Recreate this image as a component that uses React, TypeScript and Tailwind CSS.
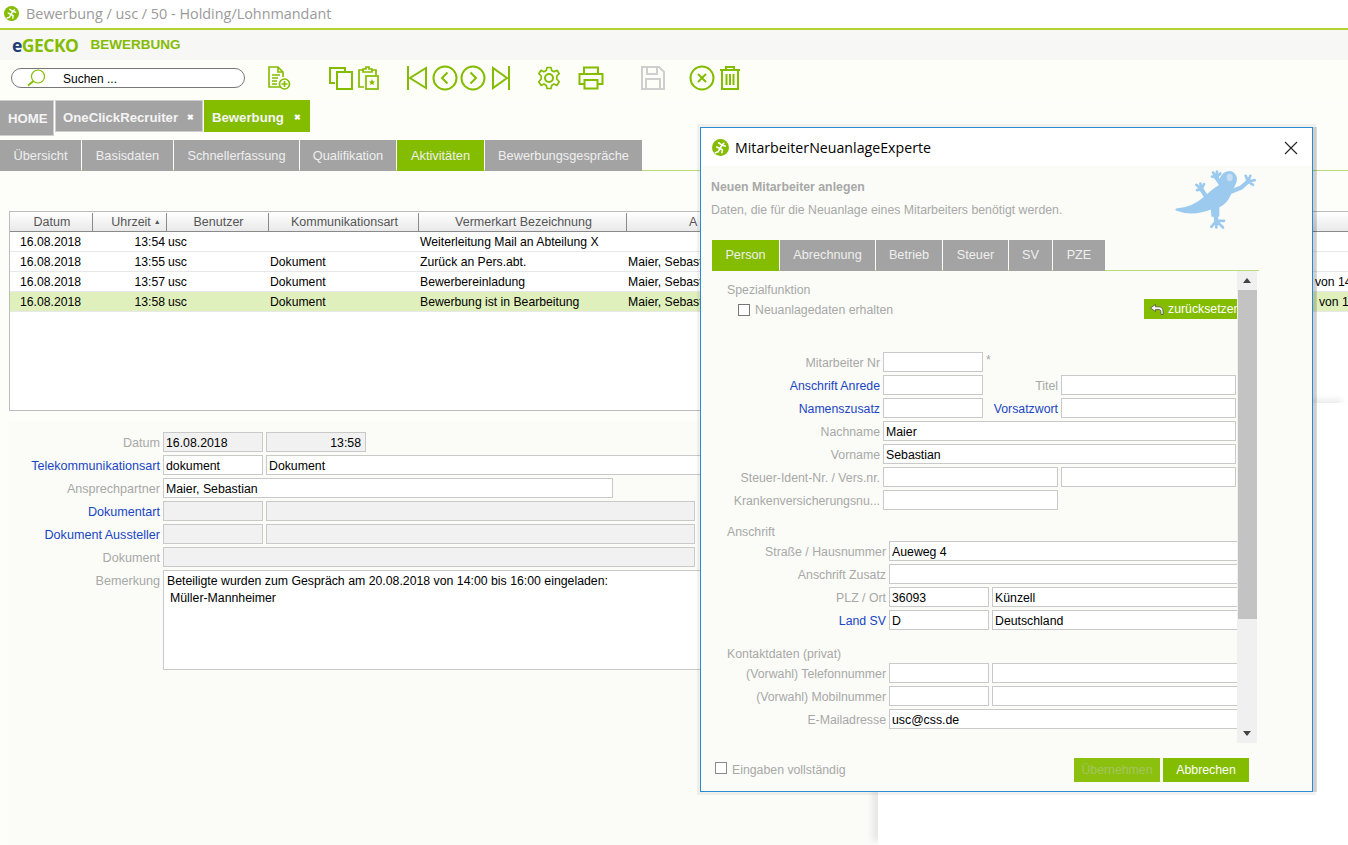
import React from "react";

const G = "#84bc00";

function GeckoBadge({ size = 18 }: { size?: number }) {
  return (
    <svg width={size} height={size} viewBox="0 0 18 18">
      <circle cx="9" cy="9" r="9" fill="#84bc00" />
      <path d="M12.5 4.5 L10.5 6.5 L7 4 M10.5 6.5 L8.5 10 L5 8.5 M8.5 10 L11 11.5 L10.5 14.5 M8.5 10 L6.5 13.5 L3.5 14.5 M10.5 6.5 L14 7.5" stroke="#fff" strokeWidth="1.7" fill="none" strokeLinecap="round" strokeLinejoin="round" />
    </svg>
  );
}

function Gecko() {
  return (
    <svg width="85" height="62" viewBox="40 25 255 185">
      <g fill="#9ccaef" stroke="#9ccaef" strokeLinecap="round" strokeLinejoin="round">
        <path d="M50 146 C80 144 110 133 135 110 C150 96 165 82 185 72 C178 60 185 38 205 34 C222 32 232 48 228 62 L218 85 L210 102 C204 118 192 130 176 138 L176 165 L158 165 L156 142 C125 155 85 160 50 146 Z" strokeWidth="6" />
        <path d="M140 108 L125 85" strokeWidth="13" fill="none" />
        <path d="M125 85 L110 72 M125 85 L122 68 M125 85 L133 70 M125 85 L112 88" strokeWidth="8" fill="none" />
        <path d="M185 72 L170 50" strokeWidth="13" fill="none" />
        <path d="M170 50 L160 35 M170 50 L172 32 M170 50 L182 38 M170 50 L157 47" strokeWidth="8" fill="none" />
        <path d="M215 92 L245 80 L265 62" strokeWidth="13" fill="none" />
        <path d="M265 62 L258 45 M265 62 L272 45 M265 62 L285 58 M265 62 L280 72" strokeWidth="8" fill="none" />
        <path d="M166 150 L170 180" strokeWidth="13" fill="none" />
        <path d="M170 180 L155 198 M170 180 L170 200 M170 180 L190 200 M170 180 L193 180" strokeWidth="8" fill="none" />
      </g>
      <ellipse cx="210" cy="50" rx="9" ry="11" fill="#c5def5" />
    </svg>
  );
}

const ic = { fill: "none", stroke: G, strokeWidth: 2 } as const;

function Toolbar() {
  return (
    <div className="flex h-[40px] items-center bg-[#fdfef8] pb-[4px]">
      <div className="ml-[11px] flex h-[20px] w-[234px] shrink-0 items-center rounded-full border border-[#777] bg-white">
        <svg width="26" height="18" viewBox="0 0 26 18" className="ml-[9px]">
          <circle cx="17" cy="7.5" r="6.5" fill="none" stroke={G} strokeWidth="1.2" />
          <path d="M12.5 12 L7 16.5" stroke={G} strokeWidth="1.8" />
        </svg>
        <span className="ml-[16px] pt-[1px] text-[12px] text-black">Suchen ...</span>
      </div>
      <svg width="24" height="26" viewBox="0 0 24 26" className="ml-[22px]" {...ic} strokeWidth="1.6">
        <path d="M13 22 H2 V2 H11 L16 7 V12 M11 2 V7 H16" />
        <path d="M5 10 H13 M5 13 H11 M5 16 H10 M5 19 H10" />
        <circle cx="17.5" cy="19" r="5" />
        <path d="M17.5 16 V22 M14.5 19 H20.5" />
      </svg>
      <svg width="26" height="24" viewBox="0 0 26 24" className="ml-[37px]" {...ic}>
        <path d="M7 17 H2 V2 H17 V5" />
        <rect x="9" y="6" width="15" height="17" />
      </svg>
      <svg width="22" height="24" viewBox="0 0 22 24" className="ml-[3px]" {...ic} strokeWidth="1.7">
        <path d="M6 4 H2 V21 H7 M15 4 H19 V9" />
        <path d="M6 6 V3 H9 V1 H12 V3 H15 V6 Z" />
        <rect x="9" y="10" width="12" height="13" />
        <path d="M15 13 L15.9 15.3 L18 15.4 L16.4 17 L17 19 L15 18 L13 19 L13.6 17 L12 15.4 L14.1 15.3 Z" fill={G} stroke="none" />
      </svg>
      <svg width="22" height="26" viewBox="0 0 22 26" className="ml-[27px]" {...ic}>
        <path d="M2 1 V25" />
        <path d="M20 3 V23 L4 13 Z" />
      </svg>
      <svg width="26" height="26" viewBox="0 0 26 26" className="ml-[4px]" {...ic}>
        <circle cx="13" cy="13" r="11.5" />
        <path d="M15.5 7.5 L10 13 L15.5 18.5" />
      </svg>
      <svg width="26" height="26" viewBox="0 0 26 26" className="ml-[2px]" {...ic}>
        <circle cx="13" cy="13" r="11.5" />
        <path d="M10.5 7.5 L16 13 L10.5 18.5" />
      </svg>
      <svg width="18" height="26" viewBox="0 0 18 26" className="ml-[6px]" {...ic}>
        <path d="M17 1 V25" />
        <path d="M1 3 V23 L15 13 Z" />
      </svg>
      <svg width="24" height="24" viewBox="0 0 24 24" className="ml-[27px]" {...ic}>
        <path d="M10 1.5 H14 L14.7 4.6 L17 5.7 L20 4.3 L22.2 7.7 L19.8 10 V13 L22.2 15.8 L20 19.4 L17 18 L14.7 19.4 L14 22.5 H10 L9.3 19.4 L7 18 L4 19.4 L1.8 15.8 L4.2 13 V10 L1.8 7.7 L4 4.3 L7 5.7 L9.3 4.6 Z" strokeWidth="1.7" strokeLinejoin="round" />
        <circle cx="12" cy="12" r="4" />
      </svg>
      <svg width="26" height="24" viewBox="0 0 26 24" className="ml-[17px]" {...ic}>
        <path d="M6 8 V1.5 H20 V8" />
        <path d="M6 18 H1.5 V8 H24.5 V18 H20" />
        <rect x="6.5" y="14" width="13" height="8.5" />
      </svg>
      <svg width="24" height="24" viewBox="0 0 24 24" className="ml-[37px]" fill="none" stroke="#cfcfcf" strokeWidth="2">
        <path d="M1 1 H18 L23 6 V23 H1 Z" />
        <path d="M6 1 V8 H16 V1" />
        <path d="M5 23 V13 H19 V23" />
      </svg>
      <svg width="26" height="26" viewBox="0 0 26 26" className="ml-[24px]" {...ic}>
        <circle cx="13" cy="13" r="11.5" />
        <path d="M9 9 L17 17 M17 9 L9 17" />
      </svg>
      <svg width="20" height="26" viewBox="0 0 20 26" className="ml-[5px]" {...ic}>
        <path d="M0 5 H20 M6 5 V2 H14 V5" />
        <path d="M2 5 V24 H18 V5" />
        <path d="M6.5 9 V20 M10 9 V20 M13.5 9 V20" />
      </svg>
    </div>
  );
}

function MainTab({ label, active, close, home }: { label: string; active?: boolean; close?: boolean; home?: boolean }) {
  return (
    <div
      className={`flex shrink-0 items-center text-[13.2px] font-bold text-[#f4f4f4] ${
        active
          ? "h-[32px] w-[106px] bg-[#84bc00] pl-[8px] pr-[9px] pt-[4px]"
          : home
            ? "h-[36px] w-[54px] items-start self-start border border-l-0 border-[#cfcfcf] bg-[#a3a3a3] pl-[8px] pt-[8px]"
            : "h-[32px] w-[148px] border border-[#cfcfcf] bg-[#a3a3a3] pl-[7px] pr-[8px] pt-[4px]"
      }`}
    >
      <span>{label}</span>
      {close && <span className="ml-auto text-[8px] leading-none text-white">✖</span>}
    </div>
  );
}

function SubTab({ label, active, w }: { label: string; active?: boolean; w: string }) {
  return (
    <div className={`flex h-[31px] items-center justify-center text-[12.8px] text-[#efefef] ${w} ${active ? "bg-[#84bc00]" : "bg-[#a3a3a3]"}`}>
      {label}
    </div>
  );
}

const cols = ["w-[83px]", "w-[74px]", "w-[102px]", "w-[150px]", "w-[208px]", "w-[686px]"];

function Row({ c, sel, extra }: { c: string[]; sel?: boolean; extra?: string }) {
  return (
    <div className={`flex h-[20px] items-center border-b border-[#e8e8e8] pt-[1px] text-[12.2px] text-black ${sel ? "bg-[#e0f0bd]" : "bg-white"}`}>
      <div className={`${cols[0]} shrink-0 pl-[10px]`}>{c[0]}</div>
      <div className={`${cols[1]} shrink-0 pr-[2px] text-right`}>{c[1]}</div>
      <div className={`${cols[2]} shrink-0 pl-[1px]`}>usc</div>
      <div className={`${cols[3]} shrink-0 pl-[1px]`}>{c[2]}</div>
      <div className={`${cols[4]} shrink-0 whitespace-nowrap pl-[1px]`}>{c[3]}</div>
      <div className={`${cols[5]} shrink-0 pl-[1px]`}>{c[4]}</div>
      {extra && <div className={`shrink-0 whitespace-nowrap ${sel ? "pl-[6px]" : "pl-[2px]"}`}>{extra}</div>}
    </div>
  );
}

function Table() {
  const heads = ["Datum", "Uhrzeit", "Benutzer", "Kommunikationsart", "Vermerkart Bezeichnung"];
  return (
    <div className="ml-[9px] mt-[40px] h-[200px] overflow-hidden border border-r-0 border-[#bdbdbd] bg-white">
      <div className="flex h-[20px] border-b border-[#8a8a8a] bg-gradient-to-b from-white to-[#e9e9e9] pt-[1px] text-[12.5px] text-[#555]">
        {heads.map((h, i) => (
          <div key={h} className={`${cols[i]} flex shrink-0 items-center justify-center whitespace-nowrap border-r border-[#8a8a8a] ${i === 1 ? "pl-[13px]" : "pl-[2px]"}`}>
            {h}
            {i === 1 && <span className="ml-[3px] text-[7px]">▲</span>}
          </div>
        ))}
        <div className="flex-1 pl-[62px] leading-[18px]">A</div>
      </div>
      <Row c={["16.08.2018", "13:54", "", "Weiterleitung Mail an Abteilung X", ""]} />
      <Row c={["16.08.2018", "13:55", "Dokument", "Zurück an Pers.abt.", "Maier, Sebastian"]} />
      <Row c={["16.08.2018", "13:57", "Dokument", "Bewerbereinladung", "Maier, Sebastian"]} extra="von 14:00" />
      <Row c={["16.08.2018", "13:58", "Dokument", "Bewerbung ist in Bearbeitung", "Maier, Sebastian"]} sel extra="von 14:00" />
    </div>
  );
}

function Field({ v, w, dis, right }: { v?: string; w: string; dis?: boolean; right?: boolean }) {
  return (
    <div
      className={`${w} h-[20px] shrink-0 overflow-hidden whitespace-nowrap border border-[#c9c9c9] pl-[2px] pr-[4px] text-[12.3px] leading-[20px] text-black ${dis ? "bg-[#f1f1f1]" : "bg-white"} ${right ? "text-right" : ""}`}
    >
      {v}
    </div>
  );
}

function Lbl({ t, link, w, big }: { t: string; link?: boolean; w: string; big?: boolean }) {
  return (
    <div className={`${w} shrink-0 whitespace-nowrap pt-[1px] text-right leading-[20px] ${big ? "text-[12.6px]" : "text-[12.3px]"} ${link ? "text-[#1a45c4]" : "text-[#a8a8a8]"}`}>{t}</div>
  );
}

function DetailForm() {
  const L = "w-[151px]";
  return (
    <div className="ml-[9px] mt-[10px] flex h-[424px] flex-col gap-[3px] bg-[#fbfcf7] pt-[11px]">
      <div className="flex h-[20px] gap-[3px]">
        <Lbl t="Datum" w={L} big />
        <Field v="16.08.2018" w="w-[100px]" dis />
        <Field v="13:58" w="w-[100px]" dis right />
      </div>
      <div className="flex h-[20px] gap-[3px]">
        <Lbl t="Telekommunikationsart" link w={L} big />
        <Field v="dokument" w="w-[100px]" />
        <Field v="Dokument" w="w-[440px]" />
      </div>
      <div className="flex h-[20px] gap-[3px]">
        <Lbl t="Ansprechpartner" w={L} big />
        <Field v="Maier, Sebastian" w="w-[450px]" />
      </div>
      <div className="flex h-[20px] gap-[3px]">
        <Lbl t="Dokumentart" link w={L} big />
        <Field w="w-[100px]" dis />
        <Field w="w-[429px]" dis />
      </div>
      <div className="flex h-[20px] gap-[3px]">
        <Lbl t="Dokument Aussteller" link w={L} big />
        <Field w="w-[100px]" dis />
        <Field w="w-[429px]" dis />
      </div>
      <div className="flex h-[20px] gap-[3px]">
        <Lbl t="Dokument" w={L} big />
        <Field w="w-[532px]" dis />
      </div>
      <div className="flex gap-[3px]">
        <Lbl t="Bemerkung" w={L} big />
        <div className="h-[100px] w-[540px] border border-[#c9c9c9] bg-white pl-[3px] pt-[2px] text-[12.3px] leading-[17px] text-black">
          <div>Beteiligte wurden zum Gespräch am 20.08.2018 von 14:00 bis 16:00 eingeladen:</div>
          <div className="pl-[3px]">Müller-Mannheimer</div>
        </div>
      </div>
    </div>
  );
}

function DRow({ label, link, w, children }: { label: string; link?: boolean; w: string; children: React.ReactNode }) {
  return (
    <div className="flex h-[20px] gap-[3px]">
      <Lbl t={label} link={link} w={w} />
      {children}
    </div>
  );
}

function Dialog() {
  const A = "w-[168px]";
  const B = "w-[174px]";
  return (
    <div className="absolute left-[700px] top-[127px] flex h-[665px] w-[613px] flex-col border border-[#2a8ad4] bg-[#fbfcf7] shadow-[0_0_0_3px_rgba(0,0,0,0.05),4px_0_0_0_rgba(0,0,0,0.14)]">
      <div className="flex h-[38px] shrink-0 items-center bg-white pl-[11px] pr-[14px] pt-[1px]">
        <GeckoBadge size={17} />
        <span className="ml-[6px] text-[14.2px] text-black" style={{ fontFamily: "'Open Sans', sans-serif" }}>MitarbeiterNeuanlageExperte</span>
        <svg width="14" height="14" viewBox="0 0 14 14" className="ml-auto" fill="none" stroke="#222" strokeWidth="1.1">
          <path d="M1 1 L13 13 M13 1 L1 13" />
        </svg>
      </div>
      <div className="flex h-[74px] shrink-0 justify-between pl-[10px] pr-[54px]">
        <div className="pt-[12px] text-[12.3px] text-[#a8a8a8]">
          <div className="font-bold">Neuen Mitarbeiter anlegen</div>
          <div className="mt-[5px]">Daten, die für die Neuanlage eines Mitarbeiters benötigt werden.</div>
        </div>
        <div className="pt-[3px]"><Gecko /></div>
      </div>
      <div className="mx-[11px] flex h-[31px] w-[547px] shrink-0 border-b border-[#b9dc78]">
        {[
          ["Person", "w-[67px]"],
          ["Abrechnung", "w-[95px]"],
          ["Betrieb", "w-[66px]"],
          ["Steuer", "w-[65px]"],
          ["SV", "w-[43px]"],
          ["PZE", "w-[52px]"],
        ].map(([t, w], i) => (
          <div key={t} className={`${w} mr-[1px] flex h-[31px] items-center justify-center text-[12.7px] text-[#efefef] ${i === 0 ? "bg-[#84bc00]" : "bg-[#a3a3a3]"}`}>
            {t}
          </div>
        ))}
      </div>
      <div className="relative ml-[11px] h-[472px] w-[547px] shrink-0 overflow-hidden">
        <div className="mr-[22px] flex h-full flex-col overflow-hidden text-[12.3px]">
          <div className="relative ml-[8px] h-[60px] shrink-0 pl-[7px] pt-[11px]">
            <div className="leading-[16px] text-[#a8a8a8]">Spezialfunktion</div>
            <div className="mt-[3px] flex items-center pl-[11px] text-[#a8a8a8]">
              <span className="mr-[5px] h-[12px] w-[12px] border border-[#777] bg-white" />
              Neuanlagedaten erhalten
            </div>
            <div className="absolute right-0 top-[28px] flex h-[20px] w-[93px] items-center overflow-hidden whitespace-nowrap bg-[#84bc00] pl-[6px] pt-[1px] text-white">
              <svg width="14" height="11" viewBox="0 0 14 11" className="mr-[4px] shrink-0">
                <path d="M5.5 0.5 L0.5 4 L5.5 7.5 V5.5 H9 C10.5 5.5 11 6.5 11 10.5 L13 10.5 C13.5 5 12 2.8 9 2.8 H5.5 Z" fill="#f5f5f5" stroke="#444" strokeWidth="0.7" />
              </svg>
              zurücksetzen
            </div>
          </div>
          <div className="mt-[11px] flex shrink-0 flex-col gap-[3px] pt-[10px]">
            <DRow label="Mitarbeiter Nr" w={A}>
              <Field w="w-[100px]" />
              <span className="leading-[16px] text-[#a8a8a8]">*</span>
            </DRow>
            <DRow label="Anschrift Anrede" link w={A}>
              <Field w="w-[100px]" />
              <Lbl t="Titel" w="w-[72px]" />
              <Field w="w-[175px]" />
            </DRow>
            <DRow label="Namenszusatz" link w={A}>
              <Field w="w-[100px]" />
              <Lbl t="Vorsatzwort" link w="w-[72px]" />
              <Field w="w-[175px]" />
            </DRow>
            <DRow label="Nachname" w={A}><Field v="Maier" w="w-[353px]" /></DRow>
            <DRow label="Vorname" w={A}><Field v="Sebastian" w="w-[353px]" /></DRow>
            <DRow label="Steuer-Ident-Nr. / Vers.nr." w={A}>
              <Field w="w-[175px]" />
              <Field w="w-[175px]" />
            </DRow>
            <DRow label="Krankenversicherungsnu..." w={A}><Field w="w-[175px]" /></DRow>
          </div>
          <div className="mt-[14px] shrink-0 pl-[15px] leading-[16px] text-[#a8a8a8]">Anschrift</div>
          <div className="mt-[1px] flex shrink-0 flex-col gap-[3px]">
            <DRow label="Straße / Hausnummer" w={B}><Field v="Aueweg 4" w="w-[360px]" /></DRow>
            <DRow label="Anschrift Zusatz" w={B}><Field w="w-[360px]" /></DRow>
            <DRow label="PLZ / Ort" w={B}>
              <Field v="36093" w="w-[100px]" />
              <Field v="Künzell" w="w-[260px]" />
            </DRow>
            <DRow label="Land SV" link w={B}>
              <Field v="D" w="w-[100px]" />
              <Field v="Deutschland" w="w-[260px]" />
            </DRow>
          </div>
          <div className="mt-[16px] shrink-0 pl-[15px] leading-[16px] text-[#a8a8a8]">Kontaktdaten (privat)</div>
          <div className="mt-[1px] flex shrink-0 flex-col gap-[3px]">
            <DRow label="(Vorwahl) Telefonnummer" w={B}>
              <Field w="w-[100px]" />
              <Field w="w-[260px]" />
            </DRow>
            <DRow label="(Vorwahl) Mobilnummer" w={B}>
              <Field w="w-[100px]" />
              <Field w="w-[260px]" />
            </DRow>
            <DRow label="E-Mailadresse" w={B}><Field v="usc@css.de" w="w-[360px]" /></DRow>
          </div>
        </div>
        <div className="absolute bottom-0 right-[2px] top-0 flex w-[20px] flex-col bg-[#f0f0f0]">
          <div className="flex h-[19px] items-center justify-center">
            <svg width="8" height="5" viewBox="0 0 8 5"><path d="M0 5 L4 0 L8 5 Z" fill="#444" /></svg>
          </div>
          <div className="ml-[1px] h-[329px] w-[19px] bg-[#c3c3c3]" />
          <div className="mt-auto flex h-[19px] items-center justify-center">
            <svg width="8" height="5" viewBox="0 0 8 5"><path d="M0 0 L4 5 L8 0 Z" fill="#444" /></svg>
          </div>
        </div>
      </div>
      <div className="flex flex-1 items-start pl-[14px] pr-[63px] pt-[15px] text-[12.3px]">
        <span className="mr-[5px] mt-[4px] h-[12px] w-[12px] border border-[#8a8a8a] bg-white" />
        <span className="mt-[3px] text-[#a8a8a8]">Eingaben vollständig</span>
        <div className="ml-auto flex gap-[3px]">
          <div className="flex h-[24px] w-[86px] items-center justify-center bg-[#8cc00e] text-[#a3c560]">Übernehmen</div>
          <div className="flex h-[24px] w-[86px] items-center justify-center bg-[#84bc00] text-white">Abbrechen</div>
        </div>
      </div>
    </div>
  );
}

export default function App() {
  return (
    <div className="relative h-[845px] w-[1348px] overflow-hidden bg-[#fdfef9]" style={{ fontFamily: "'Liberation Sans', Arial, sans-serif" }}>
      <div className="flex h-[28px] items-center bg-white pb-[1px] pl-[4px]">
        <GeckoBadge size={15} />
        <span className="ml-[7px] text-[14.4px] text-[#9a9a9a]" style={{ fontFamily: "'Open Sans', sans-serif" }}>Bewerbung / usc / 50 - Holding/Lohnmandant</span>
      </div>
      <div className="h-[2px] bg-[#b3d334]" />
      <div className="flex h-[30px] items-center bg-[#f7f7f6] pl-[12px]">
        <span className="text-[17.5px] font-bold tracking-[-0.5px]" style={{ fontFamily: "'Open Sans', sans-serif" }}>
          <span className="text-[#1f3f73]">e</span>
          <span className="text-[#84bc00]">GECKO</span>
        </span>
        <span className="ml-[12px] mt-[1px] text-[13.5px] font-bold text-[#84bc00]">BEWERBUNG</span>
      </div>
      <Toolbar />
      <div className="flex h-[36px] gap-[1px]">
        <MainTab label="HOME" home />
        <MainTab label="OneClickRecruiter" close />
        <MainTab label="Bewerbung" active close />
      </div>
      <div className="mt-[4px] flex h-[31px] border-b border-[#b9dc78]">
        <div className="flex gap-[1px]">
          <SubTab label="Übersicht" w="w-[81px]" />
          <SubTab label="Basisdaten" w="w-[91px]" />
          <SubTab label="Schnellerfassung" w="w-[125px]" />
          <SubTab label="Qualifikation" w="w-[96px]" />
          <SubTab label="Aktivitäten" active w="w-[87px]" />
          <SubTab label="Bewerbungsgespräche" w="w-[157px]" />
        </div>
      </div>
      <Table />
      <DetailForm />
      <div className="absolute left-[878px] top-[403px] h-[442px] w-[470px] bg-white shadow-[-6px_-4px_6px_rgba(0,0,0,0.08)]" />
      <Dialog />
    </div>
  );
}
